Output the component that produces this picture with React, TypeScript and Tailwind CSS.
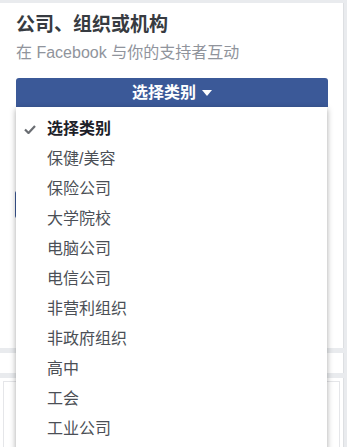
import React from "react";

const font = { fontFamily: '"Liberation Sans", "Noto Sans CJK SC", sans-serif' };

const items = [
  "保健/美容",
  "保险公司",
  "大学院校",
  "电脑公司",
  "电信公司",
  "非营利组织",
  "非政府组织",
  "高中",
  "工会",
  "工业公司",
];

export default function App() {
  return (
    <div
      className="relative h-[447px] w-[347px] overflow-hidden bg-[#e9ebee] pt-[3px]"
      style={font}
    >
      {/* Card 1 */}
      <div className="flex h-[345px] w-[344px] flex-col border-r border-[#dddfe2] bg-white pl-4 pr-[15px] pt-[10px]">
        <div className="text-[19px] font-bold leading-[24px] text-[#373b41]">
          公司、组织或机构
        </div>
        <div className="mt-[6px] text-[16px] leading-[20px] text-[#90949c]">
          在 Facebook 与你的支持者互动
        </div>
        <div className="mt-[15px] flex h-[29px] items-center justify-center gap-[6px] rounded-t-[3px] bg-[#3b5998] text-[16px] font-bold text-white">
          <span>选择类别</span>
          <svg width="10" height="6" viewBox="0 0 10 6">
            <path d="M0 0 L10 0 L5 6 Z" fill="#ffffff" />
          </svg>
        </div>
        <div className="ml-[-1px] mt-[84px] h-[27px] w-[280px] rounded-[2px] bg-[#3b5998]" />
      </div>
      {/* Card 2 */}
      <div className="mt-[5px] h-[20px] w-[344px] border-r border-[#dddfe2] bg-white" />
      {/* Card 3 */}
      <div className="mt-[5px] h-[80px] w-[344px] border-r border-[#dddfe2] bg-white p-[3px]">
        <div className="h-full border border-[#e5e6e9] bg-white" />
      </div>

      {/* Dropdown menu overlay */}
      <div className="absolute left-[16px] top-[107px] w-[311px] bg-white pb-[12px] pt-[7px] shadow-[0_2px_6px_rgba(0,0,0,0.35)]">
        <div className="relative flex h-[30px] items-center pl-[31px] text-[16px] font-bold text-[#1d2129]">
          <svg
            className="absolute left-[8px] top-[11px]"
            width="12"
            height="9"
            viewBox="0 0 12 9"
          >
            <path
              d="M1 4.5 L4.5 8 L11 1"
              fill="none"
              stroke="#6a6d72"
              strokeWidth="2.2"
            />
          </svg>
          选择类别
        </div>
        {items.map((t) => (
          <div
            key={t}
            className="flex h-[30px] items-center pl-[31px] text-[16px] text-[#4b4f56]"
          >
            {t}
          </div>
        ))}
      </div>
    </div>
  );
}
